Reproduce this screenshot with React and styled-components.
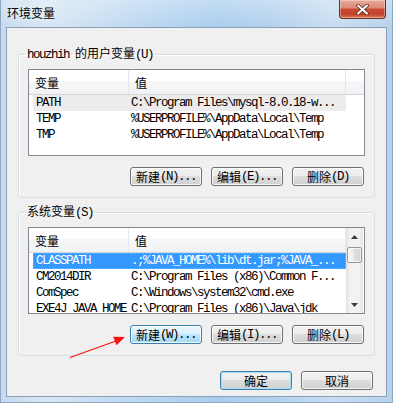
import React from 'react';
import styled, { createGlobalStyle } from 'styled-components';

const GlobalStyle = createGlobalStyle`
  html, body {
    margin: 0;
    padding: 0;
    background: #fff;
  }
  body {
    font-family: "Liberation Mono", "Noto Sans CJK SC", monospace;
  }
`;

const userVars = [
    { name: 'PATH', value: 'C:\\Program Files\\mysql-8.0.18-w...' },
    { name: 'TEMP', value: '%USERPROFILE%\\AppData\\Local\\Temp' },
    { name: 'TMP', value: '%USERPROFILE%\\AppData\\Local\\Temp' },
];

const systemVars = [
    { name: 'CLASSPATH', value: '.;%JAVA_HOME%\\lib\\dt.jar;%JAVA_...' },
    { name: 'CM2014DIR', value: 'C:\\Program Files (x86)\\Common F...' },
    { name: 'ComSpec', value: 'C:\\Windows\\system32\\cmd.exe' },
    { name: 'EXE4J_JAVA_HOME', value: 'C:\\Program Files (x86)\\Java\\jdk' },
];

// window frame (aero glass)
const Window = styled.div`
    position: relative;
    width: 393px;
    height: 403px;
    box-sizing: border-box;
    display: flex;
    flex-direction: column;
    padding: 0 6px 6px 6px;
    background:
        linear-gradient(180deg, rgba(255, 255, 255, 0.3), rgba(255, 255, 255, 0) 28px),
        linear-gradient(90deg, #c6daee 0%, #d6e6f4 12%, #bcd8f1 35%, #a9cdee 55%, #b3d2ee 70%, #c8ddf1 85%, #b6d1eb 100%);
    box-shadow: inset 1px 0 #8ea8c3, inset -1px 0 #8ea8c3, inset 0 -1px #8ea8c3;
`;

const TitleBar = styled.div`
    height: 27px;
    display: flex;
    align-items: flex-start;
    justify-content: space-between;
`;

const Title = styled.div`
    margin: 5px 0 0 1px;
    font-family: "Noto Sans CJK SC", sans-serif;
    font-size: 12px;
    line-height: 16px;
    color: #000;
    text-shadow: 0 0 6px rgba(255, 255, 255, 0.9);
`;

const CloseButton = styled.div`
    width: 47px;
    height: 19px;
    margin-right: 1px;
    box-sizing: border-box;
    display: flex;
    align-items: center;
    justify-content: center;
    border: 1px solid #6b2e24;
    border-top: none;
    border-radius: 0 0 4px 4px;
    background: linear-gradient(180deg, #e8aa9c 0%, #dc8a76 45%, #c84a33 50%, #c4452c 80%, #dc7a56 100%);
    box-shadow: inset 0 0 0 1px rgba(255, 255, 255, 0.35);
`;

// client area
const Client = styled.div`
    flex: 1;
    display: flex;
    flex-direction: column;
    padding: 18px 11px 0 11px;
    background: #f0f0f0;
    border: 1px solid #8ba0b8;
`;

const Group = styled.fieldset`
    margin: 0;
    margin-top: ${(p) => p.$top || 0}px;
    padding: 7px 9px 11px 9px;
    min-inline-size: 0;
    border: 1px solid #d5dfe5;
    border-radius: 3px;
    box-shadow: inset 1px 1px #fff;
`;

const Legend = styled.legend`
    margin-left: -3px;
    padding: 0 2px;
    font-size: 12.5px;
    line-height: 14px;
    letter-spacing: -1.5px;
    color: #000;
    white-space: pre;
`;

const Cjk = styled.span`
    font-family: "Noto Sans CJK SC", sans-serif;
    font-size: 12px;
    letter-spacing: 0;
`;

const List = styled.div`
    height: 87px;
    box-sizing: border-box;
    display: flex;
    border: 1px solid #828790;
    background: #fff;
    overflow: hidden;
`;

const ListBody = styled.div`
    width: ${(p) => (p.$w ? p.$w + 'px' : 'auto')};
    flex: ${(p) => (p.$w ? 'none' : 1)};
    display: flex;
    flex-direction: column;
`;

const Header = styled.div`
    height: 25px;
    box-sizing: border-box;
    display: flex;
    flex: none;
    border-bottom: 1px solid #d5d5d5;
    background: linear-gradient(180deg, #ffffff 0%, #ffffff 45%, #f6f7f9 45%, #f1f2f4 100%);
`;

const HeadCell = styled.div`
    width: ${(p) => p.$w}px;
    box-sizing: border-box;
    padding-left: 6px;
    border-right: 1px solid #e3e8ee;
    display: flex;
    align-items: center;
`;

const HeadFill = styled.div`
    flex: 1;
`;

const Row = styled.div`
    width: 313px;
    height: 16px;
    margin-left: 4px;
    box-sizing: border-box;
    display: flex;
    flex: none;
    font-size: 12.5px;
    line-height: 16px;
    letter-spacing: -1.5px;
    white-space: pre;
    color: ${(p) => (p.$state === 'active' ? '#fff' : '#000')};
    background: ${(p) => (p.$state === 'active' ? '#3399ff' : p.$state === 'inactive' ? '#ececec' : 'transparent')};
    outline: ${(p) => (p.$state === 'active' ? '1px dotted #e0a040' : 'none')};
    outline-offset: -1px;
`;

const NameCell = styled.div`
    width: 96px;
    box-sizing: border-box;
    padding-left: 3px;
    overflow: hidden;
`;

const ValueCell = styled.div`
    flex: 1;
    padding-left: 2px;
    overflow: hidden;
`;

const ScrollBar = styled.div`
    width: 17px;
    display: flex;
    flex-direction: column;
    background: linear-gradient(90deg, #e3e3e3 0%, #f2f2f2 25%, #f2f2f2 75%, #e6e6e6 100%);
`;

const ScrollArrow = styled.div`
    height: 17px;
    flex: none;
    display: flex;
    align-items: center;
    justify-content: center;
`;

const ScrollTrack = styled.div`
    flex: 1;
    padding-top: 2px;
`;

const ScrollThumb = styled.div`
    height: 16px;
    box-sizing: border-box;
    margin: 0 0 0 1px;
    width: 15px;
    border: 1px solid #979797;
    border-radius: 2px;
    background: linear-gradient(90deg, #f4f4f4 0%, #ececec 50%, #dedede 50%, #d6d6d6 100%);
    box-shadow: inset 0 0 0 1px rgba(255, 255, 255, 0.7);
`;

const ButtonRow = styled.div`
    display: flex;
    justify-content: flex-end;
    gap: 9px;
    margin-top: ${(p) => p.$top}px;
    margin-right: ${(p) => p.$right || 0}px;
`;

const Button = styled.button`
    width: 72px;
    height: 19px;
    padding: 0;
    margin: 0;
    box-sizing: border-box;
    display: flex;
    align-items: center;
    justify-content: center;
    font-family: "Liberation Mono", "Noto Sans CJK SC", monospace;
    font-size: 12.5px;
    letter-spacing: -1.5px;
    white-space: pre;
    color: #000;
    border-radius: 3px;
    border: 1px solid ${(p) => (p.$variant ? '#3c7fb1' : '#707070')};
    background: ${(p) =>
        p.$variant === 'hover'
            ? 'linear-gradient(180deg, #eaf6fd 0%, #d9f0fc 50%, #bee6fd 50%, #a7d9f5 100%)'
            : 'linear-gradient(180deg, #f2f2f2 0%, #ebebeb 50%, #dddddd 50%, #cfcfcf 100%)'};
    box-shadow: inset 0 0 0 1px ${(p) => (p.$variant === 'default' ? '#a8dcf7' : 'rgba(255, 255, 255, 0.8)')};
`;

const Annotation = styled.svg`
    position: absolute;
    left: 0;
    top: 0;
    pointer-events: none;
`;

function VarList({ rows, active, inactive, scroll }) {
    return (
        <List>
            <ListBody $w={scroll ? 317 : null}>
                <Header>
                    <HeadCell $w={100}><Cjk>变量</Cjk></HeadCell>
                    <HeadCell $w={217}><Cjk>值</Cjk></HeadCell>
                    {!scroll && <HeadFill />}
                </Header>
                {rows.map((r, i) => (
                    <Row key={r.name} $state={i === active ? 'active' : i === inactive ? 'inactive' : null}>
                        <NameCell>{r.name}</NameCell>
                        <ValueCell>{r.value}</ValueCell>
                    </Row>
                ))}
            </ListBody>
            {scroll && (
                <ScrollBar>
                    <ScrollArrow>
                        <svg width="7" height="4" viewBox="0 0 7 4"><polygon points="0,4 3.5,0 7,4" fill="#3d3d3d" /></svg>
                    </ScrollArrow>
                    <ScrollTrack>
                        <ScrollThumb />
                    </ScrollTrack>
                    <ScrollArrow>
                        <svg width="7" height="4" viewBox="0 0 7 4"><polygon points="0,0 3.5,4 7,0" fill="#3d3d3d" /></svg>
                    </ScrollArrow>
                </ScrollBar>
            )}
        </List>
    );
}

export default function App() {
    return (
        <>
            <GlobalStyle />
            <Window>
                <TitleBar>
                    <Title>环境变量</Title>
                    <CloseButton>
                        <svg width="13" height="11" viewBox="0 0 13 11">
                            <path d="M2 1.5 L11 9.5 M11 1.5 L2 9.5" stroke="#53211a" strokeWidth="3.6" strokeLinecap="round" />
                            <path d="M2 1.5 L11 9.5 M11 1.5 L2 9.5" stroke="#fff" strokeWidth="2" strokeLinecap="round" />
                        </svg>
                    </CloseButton>
                </TitleBar>
                <Client>
                    <Group>
                        <Legend>houzhih <Cjk>的用户变量</Cjk>(U)</Legend>
                        <VarList rows={userVars} inactive={0} />
                        <ButtonRow $top={11} $right={1}>
                            <Button><Cjk>新建</Cjk>(N)...</Button>
                            <Button><Cjk>编辑</Cjk>(E)...</Button>
                            <Button><Cjk>删除</Cjk>(D)</Button>
                        </ButtonRow>
                    </Group>
                    <Group $top={6}>
                        <Legend><Cjk>系统变量</Cjk>(S)</Legend>
                        <VarList rows={systemVars} active={0} scroll />
                        <ButtonRow $top={11} $right={1}>
                            <Button $variant="hover"><Cjk>新建</Cjk>(W)...</Button>
                            <Button><Cjk>编辑</Cjk>(I)...</Button>
                            <Button><Cjk>删除</Cjk>(L)</Button>
                        </ButtonRow>
                    </Group>
                    <ButtonRow $top={15} $right={2}>
                        <Button $variant="default"><Cjk>确定</Cjk></Button>
                        <Button><Cjk>取消</Cjk></Button>
                    </ButtonRow>
                </Client>
                <Annotation width="393" height="403" viewBox="0 0 393 403">
                    <line x1="70" y1="357.5" x2="116" y2="341" stroke="#ff1010" strokeWidth="1.2" />
                    <polygon points="125,337 116.4,345.2 113.2,336.8" fill="#ff1010" />
                </Annotation>
            </Window>
        </>
    );
}
